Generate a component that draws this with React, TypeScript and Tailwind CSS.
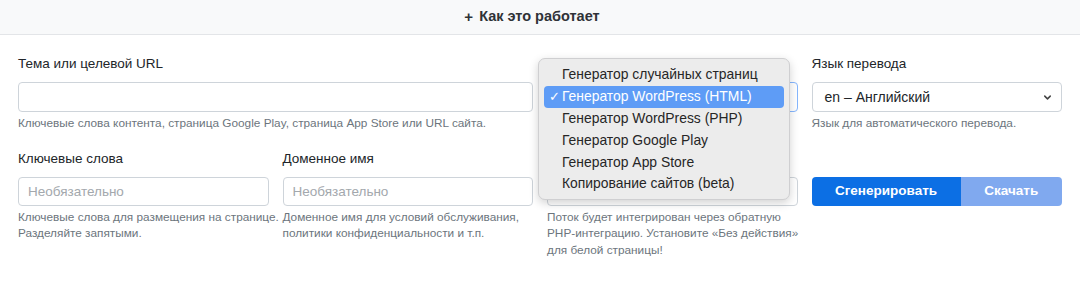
import React from 'react';

const Chevron: React.FC<{ className?: string }> = ({ className }) => (
  <svg viewBox="0 0 16 16" className={className} fill="none" stroke="currentColor" strokeWidth={2.2} strokeLinecap="round" strokeLinejoin="round">
    <path d="M4 6l4 4 4-4" />
  </svg>
);

const options = [
  'Генератор случайных страниц',
  'Генератор WordPress (HTML)',
  'Генератор WordPress (PHP)',
  'Генератор Google Play',
  'Генератор App Store',
  'Копирование сайтов (beta)',
];

const Label: React.FC<{ children?: React.ReactNode }> = ({ children }) => (
  <label className="block h-[18px] text-[13.5px] leading-[18px] text-[#212529] mb-[9px]">{children}</label>
);

// help lines are broken by hand so they wrap as in the shot
const Help: React.FC<{ lines: string[] }> = ({ lines }) => (
  <div className="mt-[3px] text-[11.8px] leading-[16.5px] text-[#6c757d] whitespace-nowrap">
    {lines.map((l) => (
      <div key={l}>{l}</div>
    ))}
  </div>
);

const App: React.FC = () => {
  return (
    <div className="w-[1080px] h-[288px] bg-white overflow-hidden" style={{ fontFamily: '"Liberation Sans", Arial, sans-serif' }}>
      <div className="h-[35px] bg-[#f8f9fa] border-b border-[#e3e5e8] flex items-center justify-center pr-[16px] text-[14.5px] font-bold text-[#2f3237]">
        <span className="mr-[6px] text-[15px] font-bold">+</span>
        Как это работает
      </div>

      <div className="relative px-[18px] pt-[20px]">
        <div className="grid grid-cols-4 gap-x-[14px] gap-y-[18px]">
          <div className="col-span-2">
            <Label>Тема или целевой URL</Label>
            <input className="w-full h-[30px] rounded-[4px] border border-[#ced4da] bg-white px-[10px] text-[13px] outline-none" />
            <Help lines={['Ключевые слова контента, страница Google Play, страница App Store или URL сайта.']} />
          </div>
          <div>
            <Label />
            <div className="h-[30px] rounded-[4px] border border-[#86b7fe] bg-white flex items-center justify-end pr-[6px] text-[#333]">
              <Chevron className="w-[10px] h-[10px]" />
            </div>
          </div>
          <div>
            <Label>Язык перевода</Label>
            <div className="h-[30px] rounded-[4px] border border-[#ced4da] bg-white flex items-center justify-between pl-[12px] pr-[8px] text-[14px] text-[#212529]">
              <span>en – Английский</span>
              <Chevron className="w-[11px] h-[11px] text-[#444]" />
            </div>
            <Help lines={['Язык для автоматического перевода.']} />
          </div>

          <div>
            <Label>Ключевые слова</Label>
            <input placeholder="Необязательно" className="w-full h-[29px] rounded-[4px] border border-[#ced4da] bg-white px-[9px] text-[13.5px] placeholder:text-[#a3a8ad] outline-none" />
            <Help lines={['Ключевые слова для размещения на странице.', 'Разделяйте запятыми.']} />
          </div>
          <div>
            <Label>Доменное имя</Label>
            <input placeholder="Необязательно" className="w-full h-[29px] rounded-[4px] border border-[#ced4da] bg-white px-[9px] text-[13.5px] placeholder:text-[#a3a8ad] outline-none" />
            <Help lines={['Доменное имя для условий обслуживания,', 'политики конфиденциальности и т.п.']} />
          </div>
          <div>
            <Label />
            <div className="h-[29px] rounded-[4px] border border-[#ced4da] bg-white flex items-center justify-end pr-[6px] text-[#555]">
              <Chevron className="w-[10px] h-[10px]" />
            </div>
            <Help
              lines={[
                'Поток будет интегрирован через обратную',
                'PHP-интеграцию. Установите «Без действия»',
                'для белой страницы!',
              ]}
            />
          </div>
          <div>
            <Label />
            <div className="flex h-[29px] rounded-[4px] overflow-hidden text-[13.5px] font-bold text-white">
              <button className="w-[149px] bg-[#0c6fe4]">Сгенерировать</button>
              <button className="flex-1 bg-[#80a9ef]">Скачать</button>
            </div>
          </div>
        </div>

        <div className="absolute left-[538px] top-[23px] w-[252px] rounded-[7px] border border-[#cfcfd1] bg-[#ececec] shadow-[0_3px_10px_rgba(0,0,0,0.18)] pt-[5px] pb-[4px] text-[13.9px] text-[#262626]">
          {options.map((o, i) => (
            <div
              key={o}
              className={
                i === 1
                  ? 'relative mx-[5px] h-[21.8px] rounded-[4px] bg-[#5e9cf6] text-white flex items-center pl-[18px]'
                  : 'relative mx-[5px] h-[21.8px] flex items-center pl-[18px]'
              }
            >
              {i === 1 && <span className="absolute left-[5px] text-[13px]">✓</span>}
              {o}
            </div>
          ))}
        </div>
      </div>
    </div>
  );
};

export default App;
